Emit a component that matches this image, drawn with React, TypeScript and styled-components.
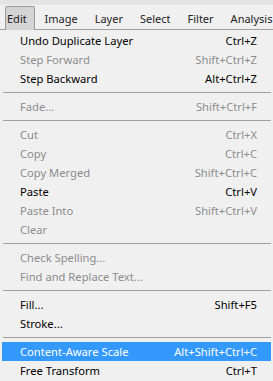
import React from "react";
import styled, { createGlobalStyle } from "styled-components";

const Global = createGlobalStyle`
  html, body { margin: 0; padding: 0; background: #f0f0f0; }
  body { width: 273px; height: 381px; overflow: hidden; font-family: "Noto Sans", "Open Sans", sans-serif; }
`;

const Window = styled.div`
  width: 273px;
  height: 381px;
  background: #f0f0f0;
  display: flex;
  flex-direction: column;
  overflow: hidden;
`;

const MenuBar = styled.div`
  height: 30px;
  flex-shrink: 0;
  box-sizing: border-box;
  padding: 6px 0 0 5px;
  display: flex;
  align-items: stretch;
  background: linear-gradient(#e4e4e4 0, #e4e4e4 5px, #f0f0f0 5px);
  border-bottom: 1px solid #a0a0a0;
  white-space: nowrap;
`;

const MenuTitle = styled.div<{ $active?: boolean }>`
  font-size: 11px;
  color: #222222;
  display: flex;
  align-items: center;
  flex-shrink: 0;
  box-sizing: border-box;
  height: 24px;
  padding: ${(p) => (p.$active ? "0 0 0 1px" : "0 7.5px")};
  ${(p) => (p.$active ? "width: 30px; margin-right: 1px;" : "")}
  background: ${(p) => (p.$active ? "#d4d4d4" : "transparent")};
  border: 1px solid ${(p) => (p.$active ? "#9a9a9a" : "transparent")};
  border-bottom: none;
  border-radius: 2px 2px 0 0;
`;

const Dropdown = styled.div`
  padding: 1px 2px 0 2px;
  display: flex;
  flex-direction: column;
`;

const Item = styled.div<{ $disabled?: boolean; $highlight?: boolean }>`
  height: 19px;
  flex-shrink: 0;
  display: flex;
  align-items: center;
  justify-content: space-between;
  padding: 0 14px 0 18px;
  font-size: 11.2px;
  white-space: nowrap;
  color: ${(p) => (p.$highlight ? "#ffffff" : p.$disabled ? "#8c8c8c" : "#000000")};
  background: ${(p) => (p.$highlight ? "#3399ff" : "transparent")};
`;

const Label = styled.span``;
const Shortcut = styled.span``;

const Separator = styled.div`
  height: 9px;
  flex-shrink: 0;
  display: flex;
  align-items: center;
  padding: 0 0 0 1px;
  &::after {
    content: "";
    display: block;
    flex: 1;
    height: 1px;
    background: #a0a0a0;
  }
`;

type Entry =
  | { sep: true }
  | { label: string; shortcut?: string; disabled?: boolean; highlight?: boolean };

const entries: Entry[] = [
  { label: "Undo Duplicate Layer", shortcut: "Ctrl+Z" },
  { label: "Step Forward", shortcut: "Shift+Ctrl+Z", disabled: true },
  { label: "Step Backward", shortcut: "Alt+Ctrl+Z" },
  { sep: true },
  { label: "Fade...", shortcut: "Shift+Ctrl+F", disabled: true },
  { sep: true },
  { label: "Cut", shortcut: "Ctrl+X", disabled: true },
  { label: "Copy", shortcut: "Ctrl+C", disabled: true },
  { label: "Copy Merged", shortcut: "Shift+Ctrl+C", disabled: true },
  { label: "Paste", shortcut: "Ctrl+V" },
  { label: "Paste Into", shortcut: "Shift+Ctrl+V", disabled: true },
  { label: "Clear", disabled: true },
  { sep: true },
  { label: "Check Spelling...", disabled: true },
  { label: "Find and Replace Text...", disabled: true },
  { sep: true },
  { label: "Fill...", shortcut: "Shift+F5" },
  { label: "Stroke..." },
  { sep: true },
  { label: "Content-Aware Scale", shortcut: "Alt+Shift+Ctrl+C", highlight: true },
  { label: "Free Transform", shortcut: "Ctrl+T" },
];

const titles = ["Edit", "Image", "Layer", "Select", "Filter", "Analysis"];

export default function App() {
  return (
    <Window>
      <Global />
      <MenuBar>
        {titles.map((t, i) => (
          <MenuTitle key={t} $active={i === 0}>
            {t}
          </MenuTitle>
        ))}
      </MenuBar>
      <Dropdown>
        {entries.map((e, i) =>
          "sep" in e ? (
            <Separator key={i} />
          ) : (
            <Item key={i} $disabled={e.disabled} $highlight={e.highlight}>
              <Label>{e.label}</Label>
              {e.shortcut && <Shortcut>{e.shortcut}</Shortcut>}
            </Item>
          )
        )}
      </Dropdown>
    </Window>
  );
}
